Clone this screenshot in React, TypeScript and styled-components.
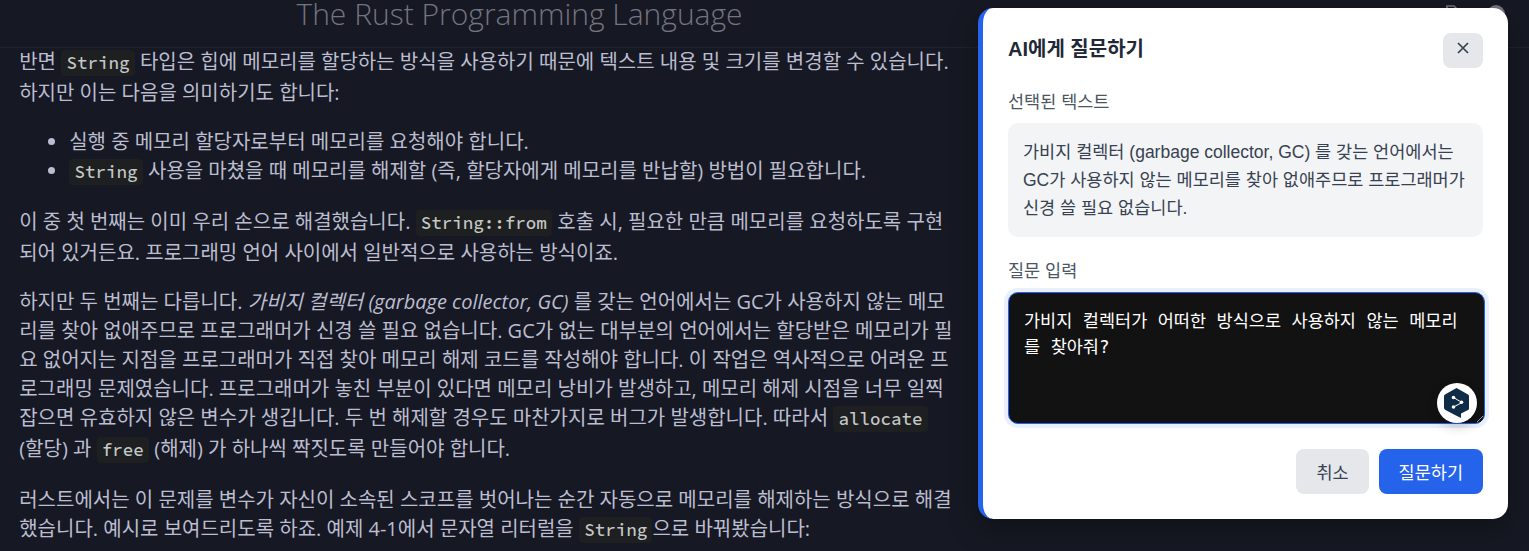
import React from 'react';
import styled, { createGlobalStyle } from 'styled-components';

const GlobalStyle = createGlobalStyle`
  *, *::before, *::after { box-sizing: border-box; }
  html, body { margin: 0; height: 100%; overflow: hidden; background: #161923; }
`;

const Page = styled.div`
  position: relative;
  width: 1529px;
  height: 551px;
  overflow: hidden;
  background: #161923;
  color: #bcbdd0;
  font: 400 20px/29px "Open Sans", "Noto Sans CJK KR", sans-serif;
`;

const MenuBar = styled.header`
  display: flex;
  justify-content: space-between;
  height: 48px;
  border-bottom: 1px solid #1f2230;
  background: #161823;
  color: #737480;
`;

const MenuTitle = styled.h1`
  width: 1039px;
  margin: 0;
  text-align: center;
  font-size: 30px;
  font-weight: 300;
  line-height: 28px;
  white-space: nowrap;
`;

const MenuIcons = styled.div`
  display: flex;
  gap: 28px;
  padding: 5px 24px 0 0;
`;

const Content = styled.main`
  margin-top: -1px;
  padding: 0 19.2px;
  white-space: nowrap;
`;

const Paragraph = styled.p`
  margin: 0 0 20px;
`;

const List = styled.ul`
  margin: 20px 0;
  padding-left: 50px;
`;

const Code = styled.code`
  padding: 1.75px 5.25px;
  border-radius: 4px;
  background: #1d1f21;
  color: #c5c8c6;
  font-family: "Source Code Pro", "Liberation Mono", monospace;
  font-size: 17.5px;
  font-weight: 500;
`;

const Dialog = styled.section`
  position: absolute;
  top: 8px;
  left: 978px;
  width: 530px;
  height: 511px;
  padding: 25px;
  border-left: 5px solid #2563eb;
  border-radius: 15px;
  background: #fff;
  box-shadow: 0 10px 30px rgba(0, 0, 0, 0.3);
  color: #374151;
  font: 400 17.5px/28px "Liberation Sans", "Noto Sans CJK KR", sans-serif;
`;

const DialogHeader = styled.div`
  display: flex;
  justify-content: space-between;
  align-items: flex-start;
  height: 35px;
`;

const DialogTitle = styled.h2`
  margin: 0;
  color: #1f2937;
  font-size: 20px;
  font-weight: 700;
  line-height: 32px;
`;

const Button = styled.button<{ $primary?: boolean }>`
  height: 45px;
  padding: 2px 20px 0;
  border: 0;
  border-radius: 8px;
  background: ${(p) => (p.$primary ? '#2563eb' : '#e5e7eb')};
  color: ${(p) => (p.$primary ? '#fff' : '#374151')};
  font: inherit;
`;

const CloseButton = styled(Button)`
  display: flex;
  justify-content: center;
  width: 40px;
  height: 35px;
  padding: 9px 0 0;
`;

const Label = styled.div`
  height: 25px;
  margin-top: 22px;
  margin-bottom: 8px;
  color: #4b5563;
  line-height: 25px;
`;

const Quote = styled.blockquote`
  margin: 0;
  height: 114px;
  padding: 15px;
  border-radius: 10px;
  background: #f3f4f6;
  white-space: nowrap;
`;

const InputWrap = styled.div`
  position: relative;
  width: 477px;
  height: 132px;
`;

const Input = styled.textarea`
  display: block;
  width: 100%;
  height: 100%;
  padding: 15px;
  border: 1px solid #2563eb;
  border-radius: 10px;
  outline: 0;
  background: #121212;
  box-shadow: 0 0 0 4px rgba(37, 99, 235, 0.1);
  color: #fff;
  font: 400 17.5px/26px "DejaVu Sans Mono", "Noto Sans CJK KR", monospace;
`;

const Badge = styled.span`
  position: absolute;
  left: 429px;
  top: 91px;
  display: flex;
  width: 40px;
  height: 40px;
  border-radius: 50%;
  background: #fff;
  box-shadow: 0 4px 12px rgba(0, 0, 0, 0.2);
`;

const Actions = styled.div`
  display: flex;
  justify-content: flex-end;
  gap: 10px;
  margin-top: 25px;
`;

export default function App() {
  return (
    <Page>
      <GlobalStyle />
      <MenuBar>
        <MenuTitle>The Rust Programming Language</MenuTitle>
        <MenuIcons>
          <svg width="14" height="18" viewBox="0 0 14 18" fill="none" stroke="currentColor" strokeWidth="1.700">
            <path d="M2 17V1h7l4 4v12z" />
          </svg>
          <svg width="18" height="18" viewBox="0 0 18 18" fill="currentColor">
            <circle cx="9" cy="9" r="9" />
          </svg>
        </MenuIcons>
      </MenuBar>
      <Content>
        <Paragraph>
          반면 <Code>String</Code> 타입은 힙에 메모리를 할당하는 방식을 사용하기 때문에 텍스트 내용 및 크기를 변경할 수 있습니다.
          <br />
          하지만 이는 다음을 의미하기도 합니다:
        </Paragraph>
        <List>
          <li>실행 중 메모리 할당자로부터 메모리를 요청해야 합니다.</li>
          <li>
            <Code>String</Code> 사용을 마쳤을 때 메모리를 해제할 (즉, 할당자에게 메모리를 반납할) 방법이 필요합니다.
          </li>
        </List>
        <Paragraph>
          이 중 첫 번째는 이미 우리 손으로 해결했습니다. <Code>String::from</Code> 호출 시, 필요한 만큼 메모리를 요청하도록 구현
          <br />
          되어 있거든요. 프로그래밍 언어 사이에서 일반적으로 사용하는 방식이죠.
        </Paragraph>
        <Paragraph>
          하지만 두 번째는 다릅니다. <em>가비지 컬렉터 (garbage collector, GC)</em> 를 갖는 언어에서는 GC가 사용하지 않는 메모
          <br />
          리를 찾아 없애주므로 프로그래머가 신경 쓸 필요 없습니다. GC가 없는 대부분의 언어에서는 할당받은 메모리가 필
          <br />
          요 없어지는 지점을 프로그래머가 직접 찾아 메모리 해제 코드를 작성해야 합니다. 이 작업은 역사적으로 어려운 프
          <br />
          로그래밍 문제였습니다. 프로그래머가 놓친 부분이 있다면 메모리 낭비가 발생하고, 메모리 해제 시점을 너무 일찍
          <br />
          잡으면 유효하지 않은 변수가 생깁니다. 두 번 해제할 경우도 마찬가지로 버그가 발생합니다. 따라서 <Code>allocate</Code>
          <br />
          (할당) 과 <Code>free</Code> (해제) 가 하나씩 짝짓도록 만들어야 합니다.
        </Paragraph>
        <Paragraph>
          러스트에서는 이 문제를 변수가 자신이 소속된 스코프를 벗어나는 순간 자동으로 메모리를 해제하는 방식으로 해결
          <br />
          했습니다. 예시로 보여드리도록 하죠. 예제 4-1에서 문자열 리터럴을 <Code>String</Code>으로 바꿔봤습니다:
        </Paragraph>
      </Content>
      <Dialog>
        <DialogHeader>
          <DialogTitle>AI에게 질문하기</DialogTitle>
          <CloseButton aria-label="닫기">
            <svg width="12" height="12" viewBox="0 0 12 12" stroke="currentColor" strokeWidth="1.700">
              <path d="M1 1 11 11M11 1 1 11" />
            </svg>
          </CloseButton>
        </DialogHeader>
        <Label>선택된 텍스트</Label>
        <Quote>
          가비지 컬렉터 (garbage collector, GC) 를 갖는 언어에서는
          <br />
          GC가 사용하지 않는 메모리를 찾아 없애주므로 프로그래머가
          <br />
          신경 쓸 필요 없습니다.
        </Quote>
        <Label>질문 입력</Label>
        <InputWrap>
          <Input spellCheck={false} defaultValue="가비지 컬렉터가 어떠한 방식으로 사용하지 않는 메모리를 찾아줘?" />
          <Badge>
            <svg width="40" height="40" viewBox="0 0 40 40">
              <path d="M19.5 5 31 11.500Q32 12 32 13V25.500Q32 26.500 31 27L24 30.500V35L17 31.500 8.500 27Q7 26 7 25V13Q7 12 8 11.500Z" fill="#0f2b46" />
              <path d="M16.500 14.500 25 19.500 16.500 24" fill="none" stroke="#fff" strokeWidth="1" />
              <g fill="#fff">
                <circle cx="16.500" cy="14.500" r="1.800" />
                <circle cx="24.500" cy="19.300" r="1.800" />
                <circle cx="16.500" cy="24" r="1.800" />
              </g>
            </svg>
          </Badge>
        </InputWrap>
        <Actions>
          <Button>취소</Button>
          <Button $primary>질문하기</Button>
        </Actions>
      </Dialog>
    </Page>
  );
}
